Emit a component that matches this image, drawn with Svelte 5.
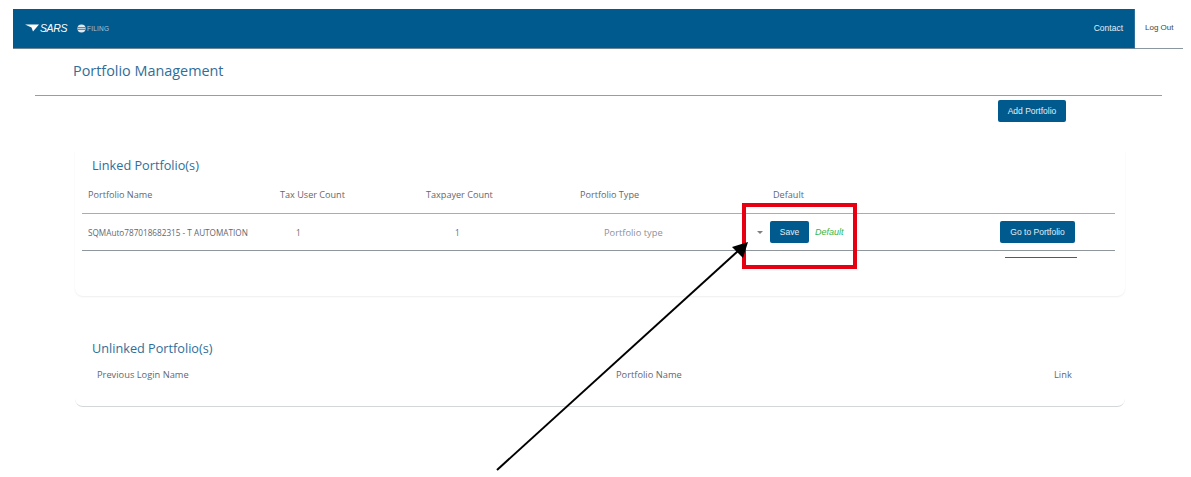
<script>
  const linkedCols = ['Portfolio Name', 'Tax User Count', 'Taxpayer Count', 'Portfolio Type', 'Default'];
</script>

<div class="page">
  <header class="topbar">
    <div class="brand">
      <svg class="sars-mark" viewBox="0 0 14 8" width="14" height="8">
        <path d="M0 0.5 L14 0.5 L8 7.5 L6.5 3.5 Z" fill="#fff" />
      </svg>
      <span class="sars">SARS</span>
      <svg class="globe" viewBox="0 0 10 10" width="9" height="9">
        <circle cx="5" cy="5" r="4.5" fill="#dfe9f1" />
        <path d="M1 4 H9 M1 6 H9" stroke="#005a8e" stroke-width="0.8" />
      </svg>
      <span class="filing">FILING</span>
    </div>
    <nav class="nav">
      <span class="contact">Contact</span>
      <span class="logout">Log Out</span>
    </nav>
  </header>

  <h1 class="page-title">Portfolio Management</h1>
  <hr class="rule" />

  <div class="actions">
    <button class="btn add">Add Portfolio</button>
  </div>

  <section class="card linked">
    <h2>Linked Portfolio(s)</h2>
    <div class="linked-head">
      {#each linkedCols as col}
        <span>{col}</span>
      {/each}
    </div>
    <div class="linked-row">
      <span class="name">SQMAuto787018682315 - T AUTOMATION</span>
      <span>1</span>
      <span>1</span>
      <span class="type">Portfolio type</span>
      <span class="default-cell">
        <i class="caret"></i>
        <button class="btn save">Save</button>
        <em class="default-tag">Default</em>
      </span>
      <button class="btn go">Go to Portfolio</button>
    </div>
    <div class="underline"></div>
  </section>

  <section class="card unlinked">
    <h2>Unlinked Portfolio(s)</h2>
    <div class="unlinked-head">
      <span>Previous Login Name</span>
      <span>Portfolio Name</span>
      <span>Link</span>
    </div>
  </section>

  <!-- annotation drawn over the screenshot -->
  <div class="highlight"></div>
  <svg class="arrow" width="1191" height="477" viewBox="0 0 1191 477">
    <line x1="497" y1="470" x2="738" y2="251" stroke="#000" stroke-width="2" />
    <path d="M748 242 L743 258 L732 247 Z" fill="#000" />
  </svg>
</div>

<style>
  :global(body) {
    margin: 0;
    background: #fff;
  }

  .page {
    position: relative;
    width: 1191px;
    height: 477px;
    overflow: hidden;
    padding-top: 9px;
    box-sizing: border-box;
    font-family: "Open Sans", "Noto Sans", sans-serif;
    color: #5f6770;
  }

  .topbar {
    display: flex;
    justify-content: space-between;
    height: 40px;
    box-sizing: border-box;
    margin: 0 8px 0 13px;
    background: #005a8e;
    border-bottom: 1px solid #6f8596;
  }

  .brand {
    display: flex;
    align-items: center;
    padding-left: 12px;
    height: 38px;
  }

  .sars-mark { margin-right: 1px; }

  .sars {
    color: #fff;
    font: italic 400 10.5px "Liberation Sans", sans-serif;
    letter-spacing: -0.4px;
    width: 37px;
  }

  .globe { margin-right: 1px; }

  .filing {
    color: #a9c4d8;
    font: 6.5px "Liberation Sans", sans-serif;
    letter-spacing: 0.2px;
  }

  .nav {
    display: flex;
    font: 8.5px "Liberation Sans", sans-serif;
  }

  .contact {
    color: #e4edf3;
    padding: 14px 11px 0 0;
  }

  .logout {
    width: 49px;
    height: 40px;
    box-sizing: border-box;
    padding-top: 14px;
    padding-left: 10px;
    background: #fff;
    color: #444;
    font-size: 8px;
    border-bottom: 1px solid #8a97a1;
    border-left: 1px solid #2c6f9c;
  }

  .page-title {
    margin: 12px 0 0 73px;
    font-size: 14.4px;
    line-height: 20px;
    font-weight: 400;
    color: #2f6e99;
  }

  .rule {
    margin: 14px 29px 0 35px;
    border: 0;
    height: 1px;
    background: #7ea4bf;
  }

  .actions {
    display: flex;
    justify-content: flex-end;
    margin: 4px 125px 0 0;
  }

  .btn {
    border: 0;
    border-radius: 2px;
    background: #005a8e;
    color: #e4edf3;
    font: 8.5px "Liberation Sans", sans-serif;
    padding: 0;
    height: 22px;
  }

  .add { width: 68px; }

  .card {
    margin: 0 66px 0 75px;
    border-radius: 0 0 8px 8px;
    box-shadow: 0 1px 2px rgba(0, 0, 0, 0.07);
  }

  h2 {
    margin: 0;
    padding-left: 17px;
    font-size: 12.7px;
    line-height: 18px;
    font-weight: 400;
    color: #2f6e99;
  }

  .linked {
    margin-top: 29px;
    height: 145px;
    padding-top: 5px;
    box-sizing: border-box;
  }

  .linked-head {
    display: grid;
    grid-template-columns: 192px 146px 154px 193px 1fr;
    margin: 14px 10px 0 7px;
    padding: 0 0 11px 6px;
    font-size: 9.1px;
    line-height: 14px;
    border-bottom: 1px solid #a6aeb4;
  }

  .linked-row {
    display: grid;
    grid-template-columns: 208px 159px 149px 153px 243px 75px;
    align-items: center;
    height: 37px;
    margin: 0 10px 0 7px;
    padding-left: 6px;
    box-sizing: border-box;
    font-size: 8.2px;
    border-bottom: 1px solid #8f979d;
  }

  .name { white-space: nowrap; }

  .type {
    color: #8b9197;
    font-size: 9.3px;
  }

  .default-cell {
    display: flex;
    align-items: center;
  }

  .caret {
    width: 0;
    height: 0;
    margin: 1px 7px 0 0;
    border-left: 3px solid transparent;
    border-right: 3px solid transparent;
    border-top: 3px solid #7b8084;
  }

  .save { width: 39px; }

  .default-tag {
    margin-left: 6px;
    color: #35b54a;
    font: italic 9px "Liberation Sans", sans-serif;
  }

  .underline {
    width: 72px;
    height: 1px;
    margin: 6px 0 0 930px;
    background: #1f6a9a;
  }

  .unlinked {
    margin-top: 34px;
    height: 77px;
    padding-top: 9px;
    box-sizing: border-box;
    border-bottom: 1px solid #d4d7d9;
    box-shadow: none;
  }

  .unlinked-head {
    display: grid;
    grid-template-columns: 519px 438px 1fr;
    margin-top: 11px;
    padding-left: 22px;
    font-size: 9.3px;
    line-height: 14px;
  }

  .highlight {
    position: absolute;
    left: 742px;
    top: 203px;
    width: 115px;
    height: 66px;
    box-sizing: border-box;
    border: 4px solid #e60012;
  }

  .arrow {
    position: absolute;
    left: 0;
    top: 0;
    pointer-events: none;
  }
</style>
